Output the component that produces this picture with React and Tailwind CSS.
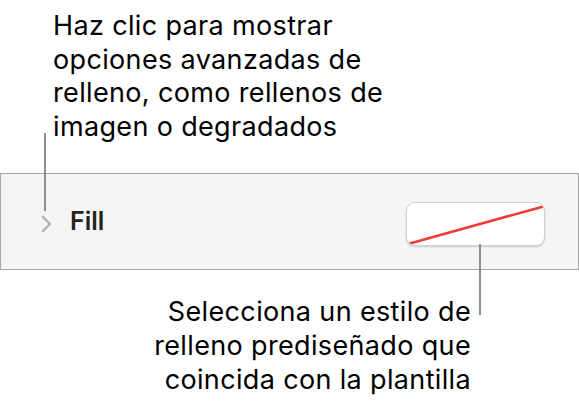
export default function App() {
  return (
    <div className="relative w-[579px] h-[410px] bg-white text-black overflow-hidden" style={{ fontFamily: "Inter, 'Liberation Sans', sans-serif" }}>
      {/* upper callout text */}
      <div className="pl-[53px] pt-[9px] text-[27px] leading-[33.5px] tracking-[0.35px]">
        <p>Haz clic para mostrar</p>
        <p>opciones avanzadas de</p>
        <p>relleno, como rellenos de</p>
        <p>imagen o degradados</p>
      </div>

      {/* fill row panel */}
      <div className="mt-[30px] h-[97px] border border-[#a6a6a6] bg-[#f5f5f5] flex items-center pl-[39px] pr-[33px]">
        <svg width="13" height="18" viewBox="0 0 13 18" className="mt-[5px]">
          <path d="M3 2 L10 9 L3 16" fill="none" stroke="#b3b3b3" strokeWidth="2.4" strokeLinecap="round" strokeLinejoin="round" />
        </svg>
        <span className="ml-[17px] text-[25px] font-semibold text-[#222]">Fill</span>
        <div className="ml-auto mt-[4px] w-[139px] h-[44px] rounded-[9px] bg-white border border-[#d2d2d2] shadow-[0_1px_2px_rgba(0,0,0,0.18)] overflow-hidden">
          <svg width="139" height="44" viewBox="0 0 139 44">
            <line x1="1" y1="41" x2="138" y2="3" stroke="#f23a36" strokeWidth="2.6" />
          </svg>
        </div>
      </div>

      {/* lower callout text */}
      <div className="mt-[25px] pr-[108px] text-right text-[27px] leading-[34px] tracking-[0.35px]">
        <p>Selecciona un estilo de</p>
        <p>relleno prediseñado que</p>
        <p>coincida con la plantilla</p>
      </div>

      {/* leader lines */}
      <div className="absolute left-[44px] top-[133px] w-[2px] h-[78px] bg-[#8e8e8e]" />
      <div className="absolute left-[479px] top-[244px] w-[2px] h-[71px] bg-[#8e8e8e]" />
    </div>
  );
}
